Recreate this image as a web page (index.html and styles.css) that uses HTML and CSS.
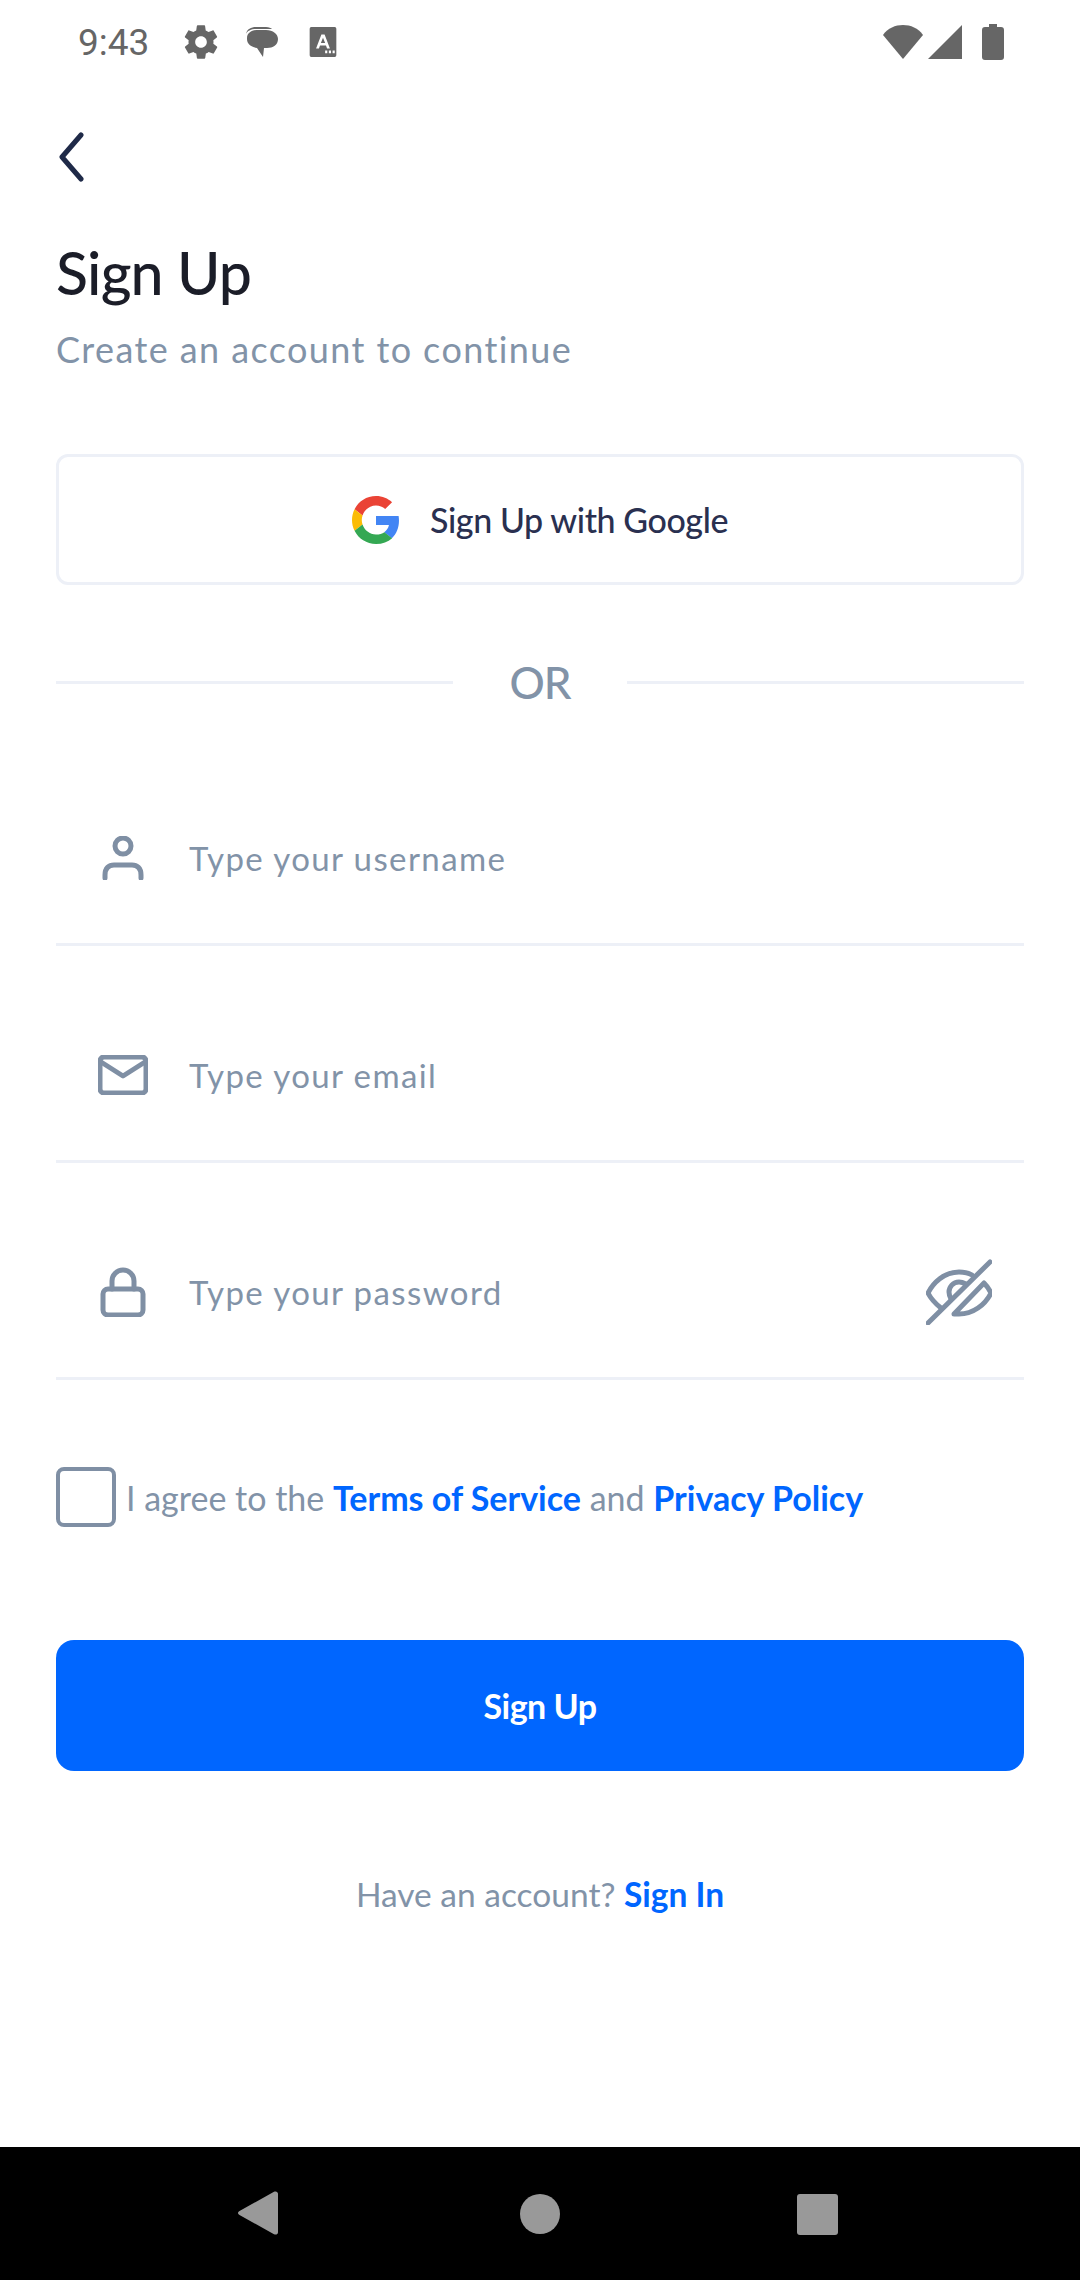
FILE: index.html
```html
<!DOCTYPE html>
<html lang="en">
<head>
    <meta charset="UTF-8">
    <meta name="viewport" content="width=device-width, initial-scale=1.0">
    <title>Sign Up</title>
    <link rel="stylesheet" href="styles.css">
</head>
<body>
    <div class="status-bar">
        <span class="clock">9:43</span>
        <svg class="status-icon gear" viewBox="0 0 24 24"><path d="M19.400 13c.04-.32.1-.66.1-1s-.06-.68-.1-1l2.100-1.650c.2-.15.25-.42.12-.64l-2-3.460c-.12-.22-.39-.3-.61-.22l-2.490 1c-.52-.4-1.080-.73-1.690-.98l-.38-2.650C14.460 2.180 14.250 2 14 2h-4c-.25 0-.46.18-.49.42l-.38 2.650c-.61.25-1.170.59-1.690.98l-2.490-1c-.23-.09-.49 0-.61.22l-2 3.460c-.13.22-.07.49.12.64L4.600 11c-.04.32-.1.66-.1 1s.06.68.1 1l-2.100 1.650c-.2.15-.25.42-.12.64l2 3.460c.12.22.39.3.61.22l2.490-1c.52.4 1.080.73 1.690.98l.38 2.650c.03.24.24.42.49.42h4c.25 0 .46-.18.49-.42l.38-2.650c.61-.25 1.170-.59 1.690-.98l2.490 1c.23.09.49 0 .61-.22l2-3.460c.12-.22.07-.49-.12-.64L19.400 13zM12 15.500c-1.930 0-3.500-1.570-3.500-3.500s1.570-3.500 3.500-3.500 3.500 1.570 3.500 3.500-1.570 3.500-3.500 3.500z"/></svg>
        <svg class="status-icon chat" viewBox="0 0 34 34"><path d="M1 9C2 4 6 2 11 2h10c3 0 5 1 6 2H11C6 4 2 6 1 9z"/><path d="M2 13c0-5 5-8 11-8h8c7 0 12 4 12 9 0 6-5 9-11 9h-3l-1 9-6-9c-6-1-10-4-10-9z"/></svg>
        <svg class="status-icon letter" viewBox="0 0 26 30"><path d="M2 1h22a1.500 1.500 0 0 1 1.500 1.500v25A1.500 1.500 0 0 1 24 29H2a1.500 1.500 0 0 1-1.500-1.500v-25A1.500 1.500 0 0 1 2 1zM11.500 8 6.500 21h2.700l1-2.800h5.600l1 2.800h2.700L14.500 8zM13 11l2 5h-4zM15 23v2.500h2V23zM18.500 23v2.500h2V23zM22 23v2.500h2V23z" fill-rule="evenodd"/></svg>
        <span class="status-spacer"></span>
        <svg class="status-icon wifi" viewBox="0 0 42 34" preserveAspectRatio="none"><path d="M0 10C5 3 13 0 21 0s16 3 21 10L21 34z"/></svg>
        <svg class="status-icon signal" viewBox="0 0 34 34"><path d="M34 0v34H0z"/></svg>
        <svg class="status-icon battery" viewBox="0 0 22 36"><path d="M7 0h8v3h4a3 3 0 0 1 3 3v27a3 3 0 0 1-3 3H3a3 3 0 0 1-3-3V6a3 3 0 0 1 3-3h4z"/></svg>
    </div>

    <main class="page">
        <svg class="back" viewBox="0 0 26 50"><path d="M23 3 4 25l19 22"/></svg>

        <h1>Sign Up</h1>
        <p class="subtitle">Create an account to continue</p>

        <button class="google-btn" type="button">
            <svg class="google-logo" viewBox="0 0 48 48">
                <path fill="#EA4335" d="M24 9.500c3.540 0 6.710 1.220 9.210 3.600l6.850-6.850C35.900 2.380 30.470 0 24 0 14.620 0 6.510 5.380 2.560 13.220l7.980 6.190C12.430 13.720 17.740 9.500 24 9.500z"/>
                <path fill="#4285F4" d="M46.980 24.550c0-1.570-.15-3.090-.38-4.550H24v9.020h12.940c-.58 2.960-2.260 5.480-4.780 7.180l7.730 6c4.510-4.180 7.090-10.360 7.090-17.650z"/>
                <path fill="#FBBC05" d="M10.530 28.590c-.48-1.450-.76-2.990-.76-4.590s.27-3.140.76-4.590l-7.980-6.190C.92 16.460 0 20.120 0 24c0 3.880.92 7.540 2.560 10.780l7.970-6.190z"/>
                <path fill="#34A853" d="M24 48c6.480 0 11.930-2.130 16.120-5.810l-7.730-6c-2.150 1.450-4.920 2.300-8.390 2.300-6.260 0-11.570-4.220-13.470-9.910l-7.980 6.190C6.510 42.620 14.620 48 24 48z"/>
            </svg>
            <span>Sign Up with Google</span>
        </button>

        <div class="divider">
            <span class="divider-line"></span>
            <span class="divider-text">OR</span>
            <span class="divider-line"></span>
        </div>

        <div class="field">
            <span class="field-icon">
                <svg class="icon-user" viewBox="0 0 42 44"><circle cx="21" cy="10" r="8"/><path d="M3 42v-3c0-7 4-10 9-10h18c5 0 9 3 9 10v3"/></svg>
            </span>
            <span class="placeholder">Type your username</span>
        </div>

        <div class="field">
            <span class="field-icon">
                <svg class="icon-mail" viewBox="0 0 50 40"><rect x="2" y="2" width="46" height="36" rx="4"/><path d="M3 7l22 14L47 7"/></svg>
            </span>
            <span class="placeholder">Type your email</span>
        </div>

        <div class="field">
            <span class="field-icon">
                <svg class="icon-lock" viewBox="0 0 46 50"><rect x="3" y="22" width="40" height="26" rx="5"/><path d="M12 22v-8a11 11 0 0 1 22 0v8"/></svg>
            </span>
            <span class="placeholder">Type your password</span>
            <svg class="icon-eye" viewBox="0 0 66 66"><path d="M2 64 64 3"/><path d="M15 49C10 45 5 40 2 34c5-10 16-21 31-21 5 0 10 1 13 3"/><path d="M25 40c-1-2-2-4-2-7 0-5 4-10 10-10 3 0 5 1 7 2"/><path d="M58 24c3 3 5 6 7 10-6 12-18 21-32 21-2 0-4 0-5 0z"/></svg>
        </div>

        <div class="terms">
            <span class="checkbox"></span>
            <p>I agree to the <a href="#">Terms of Service</a> and <a href="#">Privacy Policy</a></p>
        </div>

        <button class="submit-btn" type="button">Sign Up</button>

        <p class="signin">Have an account? <a href="#">Sign In</a></p>
    </main>

    <div class="nav-bar">
        <svg class="nav-back" viewBox="0 0 40 44"><path d="M36 .8c2-1 4 0 4 2v38.400c0 2-2 3-4 2L1.500 24c-2-1.100-2-2.900 0-4z"/></svg>
        <span class="nav-home"></span>
        <span class="nav-recent"></span>
    </div>
</body>
</html>
```

FILE: styles.css
```css
* {
    box-sizing: border-box;
}
body {
    display: flex;
    flex-direction: column;
    height: 2280px;
    margin: 0;
    padding: 0;
    background-color: #fff;
    font-family: Lato, "Open Sans", sans-serif;
    overflow: hidden;
}
a {
    color: #0066ff;
    font-weight: 700;
    text-decoration: none;
}

/* status bar */
.status-bar {
    display: flex;
    align-items: center;
    height: 84px;
    padding: 0 76px 0 78px;
}
.clock {
    margin-right: 32px;
    color: #666;
    font-family: Roboto, sans-serif;
    font-size: 37px;
}
.status-icon {
    fill: #666;
}
.gear {
    width: 40px;
    height: 40px;
    margin-right: 24px;
}
.chat {
    width: 34px;
    height: 34px;
    margin-right: 30px;
}
.letter {
    width: 28px;
    height: 32px;
}
.status-spacer {
    flex: 1;
}
.wifi {
    width: 40px;
    height: 34px;
    margin-right: 5px;
}
.signal {
    width: 34px;
    height: 34px;
    margin-right: 20px;
}
.battery {
    width: 22px;
    height: 36px;
}

/* main content */
.page {
    flex: 1;
    padding: 0 56px;
}
.back {
    display: block;
    width: 26px;
    height: 50px;
    margin: 48px 0 0 2px;
    fill: none;
    stroke: #1f2a48;
    stroke-width: 5;
    stroke-linecap: round;
    stroke-linejoin: round;
}
h1 {
    margin: 59px 0 0;
    color: #1b1d28;
    font-size: 59px;
    font-weight: 500;
    line-height: 64px;
    letter-spacing: -0.8px;
}
.subtitle {
    margin: 22px 0 0;
    color: #8293a8;
    font-size: 36px;
    font-weight: 400;
    line-height: 44px;
    letter-spacing: 1.4px;
}
.google-btn {
    display: flex;
    align-items: center;
    justify-content: center;
    gap: 30px;
    width: 100%;
    height: 131px;
    margin-top: 83px;
    background-color: #fff;
    border: 3px solid #edf0f7;
    border-radius: 12px;
    color: #2a3050;
    font-family: inherit;
    font-size: 34px;
    font-weight: 500;
    letter-spacing: -0.4px;
}
.google-logo {
    width: 48px;
    height: 48px;
}
.divider {
    display: flex;
    align-items: center;
    gap: 56px;
    height: 46px;
    margin: 74px 0 24px;
}
.divider-line {
    flex: 1;
    height: 3px;
    background-color: #edf0f7;
}
.divider-text {
    color: #8293a8;
    font-size: 44px;
    font-weight: 500;
    letter-spacing: -1px;
}

/* form fields */
.field {
    display: flex;
    align-items: center;
    height: 217px;
    padding: 43px 32px 0 0;
    border-bottom: 3px solid #edf0f7;
}
.field-icon {
    display: flex;
    justify-content: center;
    width: 133px;
    flex-shrink: 0;
}
.field-icon svg {
    fill: none;
    stroke: #7f8fa4;
    stroke-width: 5;
    stroke-linecap: round;
    stroke-linejoin: round;
}
.icon-user {
    width: 42px;
    height: 44px;
}
.icon-mail {
    width: 50px;
    height: 40px;
}
.icon-lock {
    width: 46px;
    height: 50px;
}
.placeholder {
    flex: 1;
    color: #8293a8;
    font-size: 33px;
    font-weight: 400;
    letter-spacing: 1.4px;
}
.icon-eye {
    width: 66px;
    height: 66px;
    fill: none;
    stroke: #7f8fa4;
    stroke-width: 5;
    stroke-linecap: round;
    stroke-linejoin: round;
}

/* terms, submit */
.terms {
    display: flex;
    align-items: center;
    gap: 10px;
    margin-top: 87px;
}
.checkbox {
    width: 60px;
    height: 60px;
    border: 4px solid #7f8fa4;
    border-radius: 8px;
    flex-shrink: 0;
}
.terms p {
    margin: 0;
    color: #8293a8;
    font-size: 34px;
    font-weight: 400;
}
.submit-btn {
    display: block;
    width: 100%;
    height: 131px;
    margin-top: 113px;
    background-color: #0066ff;
    border: none;
    border-radius: 18px;
    color: #fff;
    font-family: inherit;
    font-size: 34px;
    font-weight: 700;
    letter-spacing: -0.5px;
}
.signin {
    margin: 103px 0 0;
    color: #8293a8;
    font-size: 33.5px;
    font-weight: 400;
    line-height: 40px;
    text-align: center;
}

/* android nav */
.nav-bar {
    position: relative;
    height: 133px;
    background-color: #000;
}
.nav-bar > * {
    position: absolute;
}
.nav-back {
    left: 238px;
    top: 44px;
    width: 40px;
    height: 44px;
    fill: #999;
}
.nav-home {
    left: 520px;
    top: 47px;
    width: 40px;
    height: 40px;
    background-color: #999;
    border-radius: 50%;
}
.nav-recent {
    left: 797px;
    top: 47px;
    width: 41px;
    height: 41px;
    background-color: #999;
    border-radius: 3px;
}
```
